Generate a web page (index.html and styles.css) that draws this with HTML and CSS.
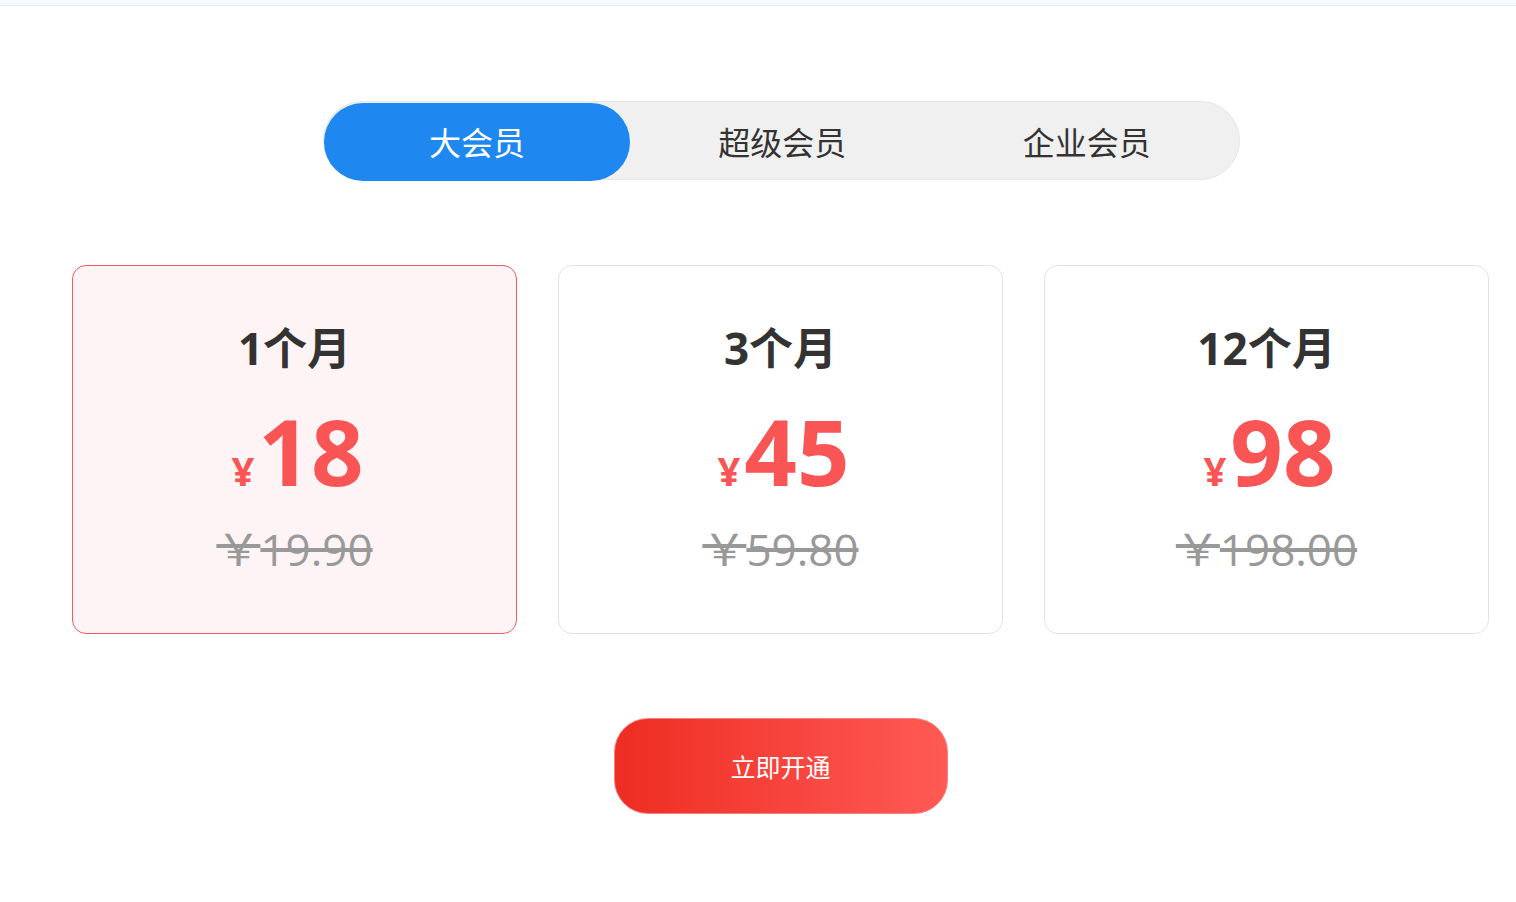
FILE: index.html
```html
<!DOCTYPE html>
<html lang="zh-CN">

<head>
    <meta charset="UTF-8">
    <meta name="viewport" content="width=device-width, initial-scale=1.0">
    <title>开通会员</title>
    <link rel="stylesheet" href="styles.css">
</head>

<body>
    <div class="topbar"></div>

    <div class="page">
        <div class="tabs">
            <div class="tab active">大会员</div>
            <div class="tab">超级会员</div>
            <div class="tab">企业会员</div>
        </div>

        <div class="plans">
            <div class="plan selected">
                <div class="plan-name">1个月</div>
                <div class="plan-price"><span class="yen">¥</span>18</div>
                <div class="plan-old"><span class="old-yen">￥</span>19.90</div>
            </div>
            <div class="plan">
                <div class="plan-name">3个月</div>
                <div class="plan-price"><span class="yen">¥</span>45</div>
                <div class="plan-old"><span class="old-yen">￥</span>59.80</div>
            </div>
            <div class="plan">
                <div class="plan-name">12个月</div>
                <div class="plan-price"><span class="yen">¥</span>98</div>
                <div class="plan-old"><span class="old-yen">￥</span>198.00</div>
            </div>
        </div>

        <div class="actions">
            <button class="buy-btn">立即开通</button>
        </div>
    </div>
</body>

</html>
```

FILE: styles.css
```css
body {
    margin: 0;
    font-family: "Open Sans", "Noto Sans CJK SC", sans-serif;
    background: #fff;
    color: #333;
}

.topbar {
    height: 5px;
    background-color: #f5f8ff;
    border-bottom: 1px solid #e6e8ee;
}

.page {
    width: 1417px;
    padding-left: 72px;
}

.tabs {
    display: flex;
    width: 915px;
    height: 77px;
    margin: 95px 0 0 251px;
    background-color: #f0f0f0;
    border: 1px solid #e6e6e6;
    border-radius: 40px;
}

.tab {
    flex: 1;
    display: flex;
    align-items: center;
    justify-content: center;
    font-family: "Noto Sans CJK SC", sans-serif;
    font-size: 32px;
    color: #333;
    cursor: pointer;
}

.tab.active {
    flex: 0 0 306px;
    margin: 1px 0 -2px 0;
    padding-bottom: 2px;
    background-color: #1e88f0;
    color: #fff;
    border-radius: 40px;
}

.plans {
    display: flex;
    gap: 41px;
    margin-top: 85px;
}

.plan {
    width: 444px;
    height: 367px;
    border: 1px solid #e3e3e3;
    border-radius: 14px;
    background-color: #fff;
    display: flex;
    flex-direction: column;
    align-items: center;
}

.plan.selected {
    border-color: #f45a5a;
    background-color: #fef4f6;
}

.plan-name {
    margin-top: 52px;
    font-size: 44px;
    font-weight: 700;
    line-height: 60px;
    color: #333;
}

.plan-price {
    margin: 24px 0 0 6px;
    font-size: 92px;
    font-weight: 700;
    line-height: 98px;
    color: #fa5555;
}

.yen {
    font-size: 40px;
    margin-right: 4px;
}

.plan-old {
    margin-top: -3px;
    font-size: 44px;
    line-height: 60px;
    color: #999;
    text-decoration: line-through;
}

.old-yen {
    font-family: "Noto Sans CJK SC", sans-serif;
}

.actions {
    display: flex;
    justify-content: center;
    margin-top: 84px;
}

.buy-btn {
    width: 334px;
    height: 96px;
    border: 1px solid #f48080;
    border-radius: 34px;
    background: linear-gradient(to right, #ee2d23, #ff5a55);
    color: #fff;
    font-family: "Noto Sans CJK SC", sans-serif;
    font-size: 25px;
    cursor: pointer;
}
```
